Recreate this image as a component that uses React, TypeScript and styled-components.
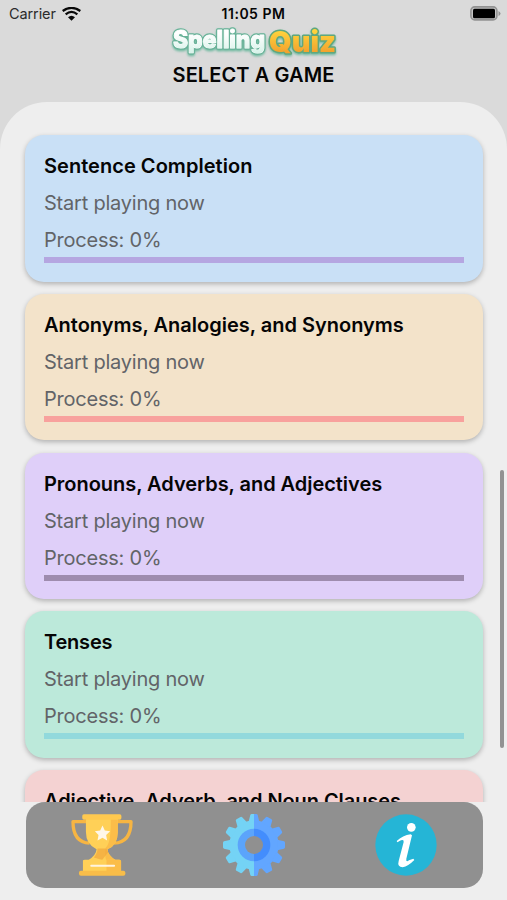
import React from "react";
import styled, { createGlobalStyle } from "styled-components";

const GlobalStyle = createGlobalStyle`
  * { box-sizing: border-box; }
  body { margin: 0; background: #eeeeee; }
`;

const Screen = styled.main`
  position: relative;
  display: flex;
  flex-direction: column;
  height: 900px;
  overflow: hidden;
  background: #dadada;
  color: #050505;
  font-family: Inter, "Liberation Sans", sans-serif;
`;

const StatusBar = styled.header`
  display: grid;
  grid-template-columns: 1fr auto 1fr;
  align-items: center;
  height: 27px;
  padding: 0 6px 0 9px;
  font-size: 14.5px;
  line-height: 27px;
`;

const Carrier = styled.span`
  display: flex;
  align-items: center;
  gap: 6px;
  color: #2b2b2b;
  letter-spacing: -0.1px;
`;

const Clock = styled.time`
  margin-right: 3px;
  font-weight: 600;
  font-size: 14px;
  letter-spacing: 0.5px;
`;

const BatterySlot = styled.span`
  display: flex;
  justify-content: flex-end;
`;

const Masthead = styled.div`
  display: flex;
  flex-direction: column;
  align-items: center;
  height: 75px;
`;

const Heading = styled.h1`
  margin: 2px 0 0;
  font-size: 20px;
  font-weight: 600;
  line-height: 26px;
  letter-spacing: 0.1px;
  white-space: nowrap;
`;

const Panel = styled.section`
  display: flex;
  flex-direction: column;
  flex: 1;
  min-height: 0;
  border-radius: 47px 47px 0 0;
  background: #eeeeee;
`;

const GameList = styled.div`
  display: flex;
  flex-direction: column;
  gap: 12.3px;
  height: 700px;
  padding: 33px 24px 0 25px;
  overflow: hidden;
`;

const Card = styled.article<{ $color: string }>`
  flex: none;
  height: 146.5px;
  padding: 18px 19px 0;
  border-radius: 19px;
  background: ${(p) => p.$color};
  box-shadow: 0 2px 5px rgba(0, 0, 0, 0.26);
`;

const CardTitle = styled.h2<{ $spacing: number }>`
  margin: 0;
  font-size: 20px;
  font-weight: 600;
  line-height: 26px;
  letter-spacing: ${(p) => p.$spacing}px;
  white-space: nowrap;
`;

const CardLine = styled.p`
  margin: 11px 0 0;
  color: #626468;
  font-size: 20px;
  line-height: 26px;
  letter-spacing: -0.22px;
  white-space: nowrap;
`;

const Progress = styled.div<{ $color: string }>`
  height: 6px;
  margin-top: 4px;
  background: ${(p) => p.$color};
`;

const Toolbar = styled.nav`
  display: flex;
  align-items: center;
  justify-content: space-around;
  height: 85.5px;
  margin: 0 24.5px 0 25.5px;
  border-radius: 19px;
  background: #909090;
`;

const ToolButton = styled.button`
  display: flex;
  padding: 0;
  border: 0;
  background: none;
`;

const ScrollThumb = styled.div`
  position: absolute;
  top: 470px;
  right: 3.5px;
  width: 4px;
  height: 278px;
  border-radius: 2px;
  background: #929292;
`;

const Wifi = () => (
  <svg width="19" height="14" viewBox="0 0 57 42" fill="none" stroke="#080808" strokeWidth="6.5">
    <path d="M2 12Q28.500 -7 55 12" />
    <path d="M11 22Q28.500 7 46 22" />
    <path d="M28.500 41L18 31Q28.500 22 39 31Z" fill="#080808" stroke="none" />
  </svg>
);

const Battery = () => (
  <svg width="31" height="15" viewBox="0 0 31 15">
    <rect x=".9" y=".9" width="26" height="13" rx="3.800" fill="#c4c4c4" stroke="#929292" strokeWidth="1.600" />
    <rect x="3" y="2.700" width="22" height="9.500" rx="1.500" fill="#000" />
    <path d="M28.500 5q2 1 2 2.500t-2 2.500z" fill="#929292" />
  </svg>
);

const Logo = () => (
  <svg width="174" height="33" viewBox="0 0 174 33" role="img" aria-label="Spelling Quiz">
    <defs>
      <linearGradient id="gold" x1="0" y1="0" x2="0" y2="1">
        <stop offset="0.2" stopColor="#ffd43c" />
        <stop offset="0.85" stopColor="#f2a02d" />
      </linearGradient>
      <linearGradient id="mint" x1="0" y1="0" x2="0" y2="1">
        <stop offset="0.3" stopColor="#ffffff" />
        <stop offset="1" stopColor="#d5f2e8" />
      </linearGradient>
      <filter id="glow" x="-10%" y="-30%" width="120%" height="170%">
        <feDropShadow dx="0" dy="1.500" stdDeviation="1.200" floodColor="#6bb89d" />
      </filter>
    </defs>
    <g fontFamily="Inter, sans-serif" fontWeight="800" strokeLinejoin="round" paintOrder="stroke" filter="url(#glow)">
      <text x="6" y="21" fontSize="24" textLength="92" lengthAdjust="spacingAndGlyphs" fill="none" stroke="#68b298" strokeWidth="3.600">Spelling</text>
      <text x="6" y="21" fontSize="24" textLength="92" lengthAdjust="spacingAndGlyphs" fill="url(#mint)" stroke="#fff" strokeWidth="1">Spelling</text>
      <text x="102" y="24.500" fontSize="29" fontWeight="900" textLength="67" lengthAdjust="spacingAndGlyphs" fill="url(#gold)" stroke="#5fa77e" strokeWidth="3">Quiz</text>
    </g>
  </svg>
);

const Trophy = () => (
  <svg width="62" height="62" viewBox="30 42 187 187">
    <g fill="none" stroke="#f7b542" strokeWidth="10" strokeLinejoin="round">
      <path d="M79 65H36Q36 127 86 130" />
      <path d="M168 65H211Q211 127 160 130" />
    </g>
    <path d="M75 57H171V96Q171 137 140 148Q140 165 167 183H80Q107 165 107 148Q75 133 75 96Z" fill="#ffd057" />
    <path d="M171 57V96Q171 137 140 148Q140 165 167 183H136Q130 156 135 143Q151 130 150 57Z" fill="#fbbd49" />
    <path d="M110 146H137L142 157L124 181L99 173Q110 160 110 146Z" fill="#f2aa3d" opacity=".75" />
    <rect x="64" y="43" width="118" height="16" rx="5" fill="#ffc94f" />
    <path d="M66 183Q66 180 72 180H176Q181 180 181 185V214H66Z" fill="#ffd057" />
    <path d="M137 180H176Q181 180 181 185V214H137Z" fill="#fbbd49" />
    <rect x="54" y="213" width="140" height="15" rx="6" fill="#f8bd49" />
    <path d="M91 198H160" stroke="#fff4df" strokeWidth="6" strokeLinecap="round" />
    <path d="M125 77L132 92L148 94L136 105L139 122L125 114L110 122L113 105L102 94L118 92Z" fill="#fff7e9" />
  </svg>
);

const toothAngles = Array.from({ length: 12 }, (_, i) => i * 30);

const Gear = () => (
  <svg width="62" height="62" viewBox="-93 -93 186 186">
    <defs>
      <clipPath id="gear-left"><rect x="-93" y="-93" width="93" height="186" /></clipPath>
      <clipPath id="gear-right"><rect x="0" y="-93" width="93" height="186" /></clipPath>
      <mask id="gear-hole">
        <rect x="-93" y="-93" width="186" height="186" fill="white" />
        <circle r="27" fill="black" />
      </mask>
    </defs>
    {[{ side: "left", outer: "#74d3f5", inner: "#5ba4fb" }, { side: "right", outer: "#62a6ff", inner: "#438dfd" }].map((half) => (
      <g key={half.side} clipPath={`url(#gear-${half.side})`}>
        <g mask="url(#gear-hole)">
          <g fill={half.outer}>
            <circle r="74" />
            {toothAngles.map((angle) => (
              <path key={angle} d="M-16 -70L-11 -90Q-10 -93 -7 -93H7Q10 -93 11 -90L16 -70Z" transform={`rotate(${angle})`} />
            ))}
          </g>
          <circle r="49" fill={half.inner} />
        </g>
      </g>
    ))}
  </svg>
);

const Info = () => (
  <svg width="62" height="62" viewBox="46 42 186 186">
    <circle cx="139" cy="135" r="92" fill="#25b5d6" />
    <circle cx="155" cy="82" r="13" fill="#fff" />
    <path d="M111 123Q129 106 153 103L157 106L140 176Q138 188 148 181L161 176L164 180Q145 199 129 202Q112 201 117 183L132 126Q133 117 124 121L113 127Z" fill="#fff" />
  </svg>
);

const games = [
  { title: "Sentence Completion", color: "#c9e0f6", progress: "#b5a6e1", spacing: 0.04 },
  { title: "Antonyms, Analogies, and Synonyms", color: "#f3e3ca", progress: "#f8a19d", spacing: 0 },
  { title: "Pronouns, Adverbs, and Adjectives", color: "#dfcff9", progress: "#9e8cae", spacing: -0.04 },
  { title: "Tenses", color: "#bce9da", progress: "#92d9dc", spacing: -0.2 },
  { title: "Adjective, Adverb, and Noun Clauses", color: "#f4d2d2", progress: "#e6a4a4", spacing: -0.07 },
];

export default function App() {
  return (
    <Screen>
      <GlobalStyle />
      <StatusBar>
        <Carrier>Carrier <Wifi /></Carrier>
        <Clock>11:05 PM</Clock>
        <BatterySlot><Battery /></BatterySlot>
      </StatusBar>
      <Masthead>
        <Logo />
        <Heading>SELECT A GAME</Heading>
      </Masthead>
      <Panel>
        <GameList>
          {games.map((game) => (
            <Card key={game.title} $color={game.color}>
              <CardTitle $spacing={game.spacing}>{game.title}</CardTitle>
              <CardLine>Start playing now</CardLine>
              <CardLine>Process: 0%</CardLine>
              <Progress $color={game.progress} />
            </Card>
          ))}
        </GameList>
        <Toolbar>
          <ToolButton aria-label="Trophies"><Trophy /></ToolButton>
          <ToolButton aria-label="Settings"><Gear /></ToolButton>
          <ToolButton aria-label="Information"><Info /></ToolButton>
        </Toolbar>
      </Panel>
      <ScrollThumb />
    </Screen>
  );
}
